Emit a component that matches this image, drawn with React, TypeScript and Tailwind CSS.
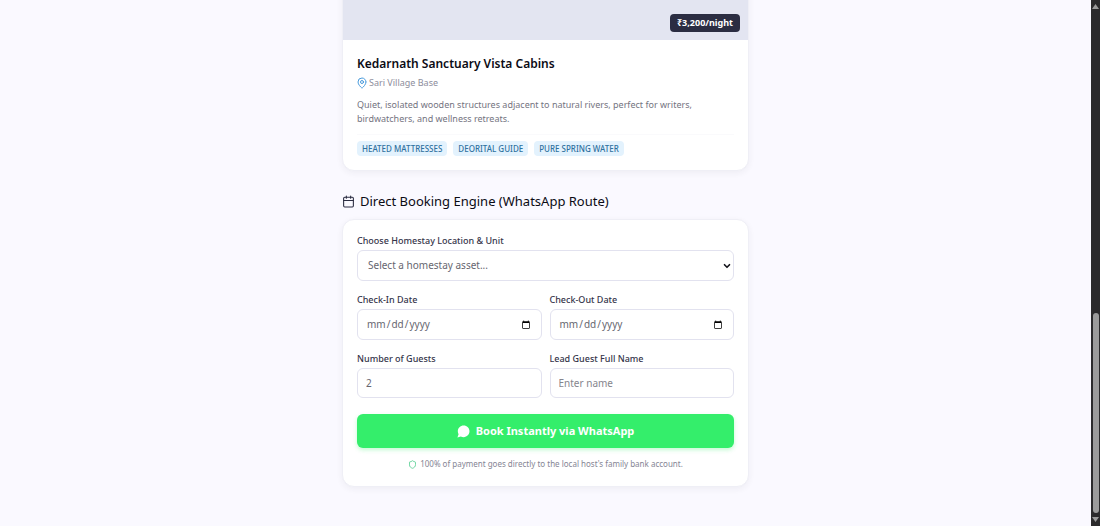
import { useState } from "react"
import type { FormEvent } from "react"
import { Calendar, ChevronDown, MapPin, Shield } from "lucide-react"

const tags = ["Heated Mattresses", "Deorital Guide", "Pure Spring Water"]

const cardStyle = "rounded-xl border border-[#efeff6] bg-white shadow-[0_2px_6px_rgba(43,45,66,0.06)]"
const labelStyle = "block text-[9px] leading-[17px] font-medium text-[#35354a]"
const fieldStyle = "block w-full rounded-md border border-[#e2e2ef] bg-white px-2 text-[10px] text-[#66666f] outline-none placeholder:text-[#85858d]"

function StayCard() {
    return (
        <article className={`${cardStyle} overflow-hidden`}>
            <div className="flex h-14 items-end justify-end bg-[#e3e5f1] px-2 pb-2">
                <span className="rounded bg-[#2b2d42] px-[7px] text-[9px] leading-[18px] font-bold text-white">₹3,200/night</span>
            </div>
            <div className="p-[14px]">
                <h3 className="text-[12px] leading-5 font-semibold text-[#0b0b14]">Kedarnath Sanctuary Vista Cabins</h3>
                <p className="mt-[2px] -ml-px flex items-center gap-px text-[9px] leading-[14px] text-[#8d8d9c]">
                    <MapPin size={12} className="text-[#4a9bdc]" />
                    Sari Village Base
                </p>
                <p className="mt-2 text-[9px] leading-[14px] text-[#74747f]">
                    Quiet, isolated wooden structures adjacent to natural rivers, perfect for writers, birdwatchers, and wellness retreats.
                </p>
                <div className="mt-2 flex gap-[6px] border-t border-[#fafafc] pt-[6px]">
                    {tags.map((tag) => (
                        <span key={tag} className="rounded bg-[#e3f2fd] px-[5px] text-[8px] leading-[15px] font-medium text-[#2f71a0] uppercase">{tag}</span>
                    ))}
                </div>
            </div>
        </article>
    )
}

function BookingForm() {
    const [ guests, setGuests ] = useState("2")
    const [ name, setName ] = useState("")

    function handleSubmit(e: FormEvent) {
        e.preventDefault()
    }

    return (
        <form onSubmit={handleSubmit} className={`${cardStyle} px-[14px] pt-3 pb-[14px]`}>
            <label htmlFor="unit" className={labelStyle}>Choose Homestay Location &amp; Unit</label>
            <div className="relative mt-px">
                <select id="unit" className="block h-[31px] w-full appearance-none rounded-md border border-[#e2e2ef] bg-white px-[10px] text-[10px] text-[#66666f] outline-none">
                    <option>Select a homestay asset...</option>
                    <option>Kedarnath Sanctuary Vista Cabins</option>
                </select>
                <ChevronDown size={10} strokeWidth={4} className="pointer-events-none absolute inset-y-0 right-[2px] my-auto text-[#15151c]" />
            </div>

            <div className="mt-[10px] grid grid-cols-2 gap-x-2 gap-y-[10px]">
                <div>
                    <label htmlFor="checkin" className={labelStyle}>Check-In Date</label>
                    <input id="checkin" type="date" className={`${fieldStyle} mt-px h-[31px]`} />
                </div>
                <div>
                    <label htmlFor="checkout" className={labelStyle}>Check-Out Date</label>
                    <input id="checkout" type="date" className={`${fieldStyle} mt-px h-[31px]`} />
                </div>
                <div>
                    <label htmlFor="guests" className={labelStyle}>Number of Guests</label>
                    <input id="guests" type="number" min="1" value={guests} onChange={(e) => setGuests(e.target.value)} className={`${fieldStyle} mt-px h-[30px]`} />
                </div>
                <div>
                    <label htmlFor="name" className={labelStyle}>Lead Guest Full Name</label>
                    <input id="name" type="text" placeholder="Enter name" value={name} onChange={(e) => setName(e.target.value)} className={`${fieldStyle} mt-px h-[30px]`} />
                </div>
            </div>

            <button type="submit" className="mt-4 flex h-[34px] w-full items-center justify-center gap-[6px] rounded-md bg-[#34ee6b] text-[11px] font-bold text-white shadow-[0_2px_4px_rgba(52,238,107,0.3)]">
                <svg width="13" height="13" viewBox="0 0 24 24" fill="currentColor" aria-hidden="true">
                    <path d="M12.3 1C18.5 1 23 5.700 23 11.700S18.500 22.400 12.300 22.400c-2 0-3.700-.4-5.200-1.300L.8 23l2.100-5.900C2 15.500 1.500 13.700 1.500 11.700 1.500 5.700 6.200 1 12.300 1z" />
                </svg>
                Book Instantly via WhatsApp
            </button>
            <p className="mt-2 flex items-center justify-center gap-[3px] text-[8px] leading-4 text-[#858594]">
                <Shield size={9} className="text-[#45c987]" />
                100% of payment goes directly to the local host's family bank account.
            </p>
        </form>
    )
}

function ScrollTrack() {
    return (
        <div aria-hidden="true" className="flex w-[9px] shrink-0 flex-col items-center bg-[#2b2a2c] py-1">
            <svg width="7" height="5" viewBox="0 0 7 5"><path d="M3.500 0L7 5H0z" fill="#9b9b9b" /></svg>
            <div className="grow-[305]" />
            <div className="w-[6px] grow-[200] rounded-full bg-[#9b9b9b]" />
            <svg width="7" height="5" viewBox="0 0 7 5" className="mt-1"><path d="M3.500 5L7 0H0z" fill="#9b9b9b" /></svg>
        </div>
    )
}

export default function App() {
    return (
        <div className="flex min-h-screen overflow-hidden bg-[#faf9ff] font-['Noto_Sans',sans-serif]">
            <main className="min-w-0 flex-1">
                <div className="mx-auto -mt-[17px] w-full max-w-[407px]">
                    <StayCard />
                    <h2 className="mt-[18px] mb-[6px] flex items-center gap-[5px] text-[13px] leading-6 text-[#0b0b14]">
                        <Calendar size={13} className="text-[#2b2d42]" />
                        Direct Booking Engine (WhatsApp Route)
                    </h2>
                    <BookingForm />
                </div>
            </main>
            <ScrollTrack />
        </div>
    )
}
